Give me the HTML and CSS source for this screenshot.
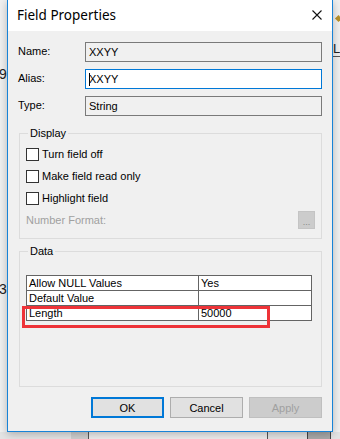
FILE: index.html
```html
<!DOCTYPE html>
<html lang="en">
<head>
    <meta charset="UTF-8">
    <meta name="viewport" content="width=device-width, initial-scale=1.0">
    <title>Field Properties</title>
    <link rel="stylesheet" href="styles.css">
</head>
<body>
    <!-- bits of the window behind the dialog -->
    <div class="behind">
        <span class="bg-num bg-num-9">9</span>
        <span class="bg-num bg-num-3">3</span>
        <span class="bg-lo">Lo</span>
        <span class="bg-diamond"></span>
        <div class="bg-strip">
            <span class="strip-cell strip-a"></span>
            <span class="strip-cell strip-b"></span>
            <span class="strip-cell strip-c"></span>
        </div>
    </div>

    <div class="dialog">
        <div class="titlebar">
            <span class="title">Field Properties</span>
            <svg class="close" width="10" height="10" viewBox="0 0 10 10">
                <path d="M0.5 0.5 L9.5 9.5 M9.5 0.5 L0.5 9.5" stroke="#111" stroke-width="1.1" fill="none"/>
            </svg>
        </div>

        <div class="content">
            <div class="props">
                <label class="prop-label">Name:</label>
                <div class="field readonly">XXYY</div>
                <label class="prop-label">Alias:</label>
                <div class="field focused"><span class="caret"></span>XXYY</div>
                <label class="prop-label">Type:</label>
                <div class="field readonly">String</div>
            </div>

            <fieldset class="group display">
                <legend>Display</legend>
                <div class="check-row"><span class="checkbox"></span>Turn field off</div>
                <div class="check-row"><span class="checkbox"></span>Make field read only</div>
                <div class="check-row"><span class="checkbox"></span>Highlight field</div>
                <div class="format-row">
                    <span class="disabled-text">Number Format:</span>
                    <span class="dots-btn">...</span>
                </div>
            </fieldset>

            <fieldset class="group data">
                <legend>Data</legend>
                <table class="grid">
                    <tr><td>Allow NULL Values</td><td>Yes</td></tr>
                    <tr><td>Default Value</td><td></td></tr>
                    <tr><td>Length</td><td>50000</td></tr>
                </table>
            </fieldset>

            <div class="buttons">
                <button class="btn default">OK</button>
                <button class="btn">Cancel</button>
                <button class="btn" disabled>Apply</button>
            </div>
        </div>

        <div class="highlight"></div>
    </div>
</body>
</html>
```

FILE: styles.css
```css
body {
    margin: 0;
    height: 439px;
    overflow: hidden;
    background-color: #f0f0f0;
    font-family: "Liberation Sans", Arial, sans-serif;
    font-size: 11px;
    color: #000;
    position: relative;
}

/* window behind */
.behind {
    position: absolute;
    inset: 0;
}
.bg-num {
    position: absolute;
    left: -1px;
    font-size: 14px;
    color: #222;
}
.bg-num-9 { top: 66px; }
.bg-num-3 { top: 281px; }
.bg-lo {
    position: absolute;
    left: 333px;
    top: 41px;
    font-size: 13px;
    color: #222;
    border-bottom: 1px solid #555;
}
.bg-diamond {
    position: absolute;
    left: 336px;
    top: 16px;
    width: 5px;
    height: 5px;
    background-color: #b8922c;
    transform: rotate(45deg);
}
.bg-strip {
    position: absolute;
    left: 0;
    right: 0;
    top: 432px;
    height: 7px;
    background-color: #e4e4e4;
}
.strip-cell {
    position: absolute;
    top: 0;
    height: 7px;
}
.strip-a {
    left: 71px;
    width: 17px;
    background-color: #cfcfcf;
}
.strip-b {
    left: 88px;
    width: 178px;
    border-left: 1px solid #555;
    border-right: 1px solid #555;
    background-color: #ededed;
}
.strip-c {
    left: 307px;
    width: 22px;
    background-color: #a9a9a9;
    border-left: 1px solid #444;
    border-right: 1px solid #444;
}

/* dialog */
.dialog {
    position: relative;
    margin-left: 7px;
    width: 324px;
    height: 431px;
    border: 1px solid #1883d7;
    border-top: none;
    background-color: #f0f0f0;
    box-shadow: 0 2px 8px rgba(0, 0, 0, 0.25);
}
.titlebar {
    height: 31px;
    background-color: #fff;
    display: flex;
    align-items: center;
    justify-content: space-between;
    padding: 0 10px 0 9px;
}
.title {
    font-family: "Noto Sans", "Open Sans", sans-serif;
    font-size: 13.5px;
    color: #000;
    margin-top: -1px;
}
.close {
    margin-top: -1px;
}
.content {
    padding: 11px 10px 0 10px;
}

.props {
    display: grid;
    grid-template-columns: 67px 1fr;
    row-gap: 7px;
    align-items: center;
}
.prop-label {
    margin-top: -2px;
}
.field {
    height: 18px;
    line-height: 18px;
    border: 1px solid #7a7a7a;
    padding: 0 3px;
    background-color: #f0f0f0;
    font-size: 11px;
    position: relative;
}
.field.focused {
    background-color: #fff;
    border-color: #0078d7;
}
.caret {
    position: absolute;
    left: 3px;
    top: 3px;
    width: 1px;
    height: 13px;
    background-color: #000;
}

.group {
    margin: 11px 0 0 1px;
    padding: 3px 6px 7px 6px;
    border: 1px solid #dcdcdc;
}
.group legend {
    padding: 0 2px;
    margin-left: 2px;
    line-height: 13px;
}
.check-row {
    height: 22px;
    display: flex;
    align-items: center;
}
.checkbox {
    width: 11px;
    height: 11px;
    border: 1px solid #333;
    background-color: #fff;
    margin-right: 3px;
}
.format-row {
    height: 22px;
    display: flex;
    align-items: center;
    justify-content: space-between;
}
.disabled-text {
    color: #a0a0a0;
}
.dots-btn {
    width: 15px;
    height: 16px;
    background-color: #cccccc;
    border: 1px solid #c4c4c4;
    color: #888;
    font-size: 9px;
    line-height: 20px;
    text-align: center;
}

.data {
    margin-top: 6px;
    height: 116px;
    padding-top: 17px;
}
.grid {
    border-collapse: collapse;
    width: 286px;
    background-color: #fff;
}
.grid td {
    border: 1px solid #646464;
    height: 14px;
    padding: 0 2px;
    line-height: 14px;
}
.grid td:first-child {
    width: 167px;
}

.buttons {
    display: flex;
    justify-content: flex-end;
    gap: 6px;
    margin-top: 10px;
}
.btn {
    width: 73px;
    height: 21px;
    border: 1px solid #adadad;
    background-color: #e1e1e1;
    font-family: "Liberation Sans", Arial, sans-serif;
    font-size: 11px;
    color: #000;
    padding: 0;
}
.btn.default {
    border: 2px solid #0078d7;
}
.btn:disabled {
    background-color: #cccccc;
    border-color: #bfbfbf;
    color: #a0a0a0;
}

.highlight {
    position: absolute;
    left: 14px;
    top: 306px;
    width: 242px;
    height: 16px;
    border: 3px solid #ee3338;
}
```
